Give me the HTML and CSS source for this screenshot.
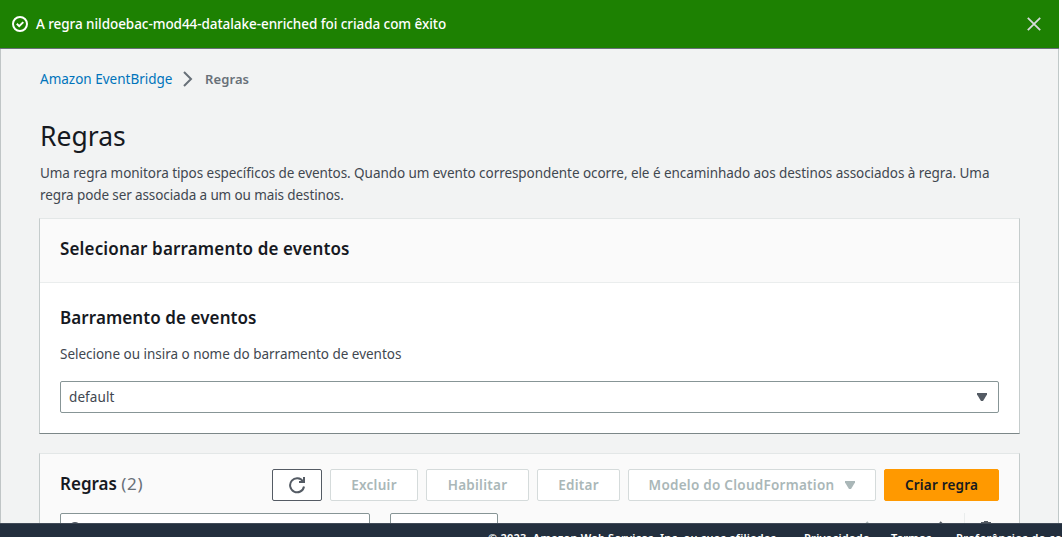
FILE: index.html
```html
<!DOCTYPE html>
<html lang="pt-BR">
<head>
<meta charset="utf-8">
<title>Regras - Amazon EventBridge</title>
<link rel="stylesheet" href="styles.css">
</head>
<body>
<div class="app">
  <div class="flash">
    <svg class="flash-icon" width="16" height="16" viewBox="0 0 16 16" fill="none" stroke="#fff" stroke-width="2"><circle cx="8" cy="8" r="7"/><path d="M4.8 7.8l2.4 2.4 4.1-4.1"/></svg>
    <span class="flash-text">A regra nildoebac-mod44-datalake-enriched foi criada com êxito</span>
    <svg class="flash-close" width="14" height="14" viewBox="0 0 14 14" fill="none" stroke="#d5dbdb" stroke-width="1.8"><path d="M.8.8l12.4 12.4M13.200.8L.8 13.200"/></svg>
  </div>
  <main class="page">
    <nav class="crumbs">
      <a class="crumb-link">Amazon EventBridge</a>
      <svg class="crumb-sep" width="10" height="16" viewBox="0 0 10 16" fill="none" stroke="#687078" stroke-width="2"><path d="M1 1l7 7-7 7"/></svg>
      <span class="crumb-here">Regras</span>
    </nav>
    <h1 class="title"><span>Regras</span></h1>
    <p class="intro"><span class="intro-a">Uma regra monitora tipos específicos de eventos. Quando um evento correspondente ocorre, ele é encaminhado aos destinos associados à regra. Uma</span><br><span class="intro-b">regra pode ser associada a um ou mais destinos.</span></p>
    <section class="card">
      <header class="card-head"><h2 class="h2-select">Selecionar barramento de eventos</h2></header>
      <div class="card-body">
        <h2 class="h2-bus">Barramento de eventos</h2>
        <p class="hint"><span>Selecione ou insira o nome do barramento de eventos</span></p>
        <div class="select"><span class="select-text">default</span><svg width="10" height="8" viewBox="0 0 10 8" fill="#545b64"><path d="M0 0h10v1.500L6 8H4L0 1.500z"/></svg></div>
      </div>
    </section>
    <section class="card rules">
      <div class="toolbar">
        <h2 class="rules-title"><span class="rules-name">Regras</span> <span class="count">(2)</span></h2>
        <button class="btn refresh"><svg width="18" height="18" viewBox="0 0 18 18" fill="none" stroke="#545b64" stroke-width="2"><path d="M16 10.500A7 7 0 1 1 15 5.500"/><path d="M11 6h5V1"/></svg></button>
        <button class="btn off excluir"><span>Excluir</span></button>
        <button class="btn off habilitar"><span>Habilitar</span></button>
        <button class="btn off editar"><span>Editar</span></button>
        <button class="btn off modelo"><span>Modelo do CloudFormation</span><svg width="10" height="8" viewBox="0 0 10 8" fill="#aab7b8"><path d="M0 0h10v1.500L6 8H4L0 1.500z"/></svg></button>
        <button class="btn primary"><span>Criar regra</span></button>
      </div>
      <div class="filters">
        <div class="search"><svg width="14" height="14" viewBox="0 0 14 14" fill="none" stroke="#545b64" stroke-width="2"><circle cx="6" cy="6" r="5"/><path d="M10 10l3 3"/></svg></div>
        <div class="status"></div>
        <div class="pager">
          <svg width="10" height="14" viewBox="0 0 10 14" fill="none" stroke="#aab7b8" stroke-width="2"><path d="M8 1L2 7l6 6"/></svg>
          <svg width="10" height="14" viewBox="0 0 10 14" fill="none" stroke="#545b64" stroke-width="2"><path d="M2 1l6 6-6 6"/></svg>
        </div>
        <div class="prefs"><svg width="16" height="16" viewBox="0 0 16 16" fill="#545b64" fill-rule="evenodd"><path d="M6 0h4v1h3v2l2 1v3l-1 1 1 1v3l-2 1v2h-3v1H6v-1H3v-2l-2-1V9l1-1-1-1V4l2-1V1h3zM8 4a4 4 0 1 0 0 8 4 4 0 0 0 0-8z"/></svg></div>
      </div>
    </section>
  </main>
</div>
<footer class="footer">
  <span class="copy">© 2023, Amazon Web Services, Inc. ou suas afiliadas.</span>
  <span class="priv">Privacidade</span>
  <span class="terms">Termos</span>
  <span class="cookies">Preferências de cookies</span>
</footer>
</body>
</html>
```
FILE: styles.css
```css
* { box-sizing: border-box; }
body {
  margin: 0;
  display: flex;
  flex-direction: column;
  height: 537px;
  overflow: hidden;
  background: #fff;
  color: #16191f;
  font-family: "Noto Sans", "Open Sans", sans-serif;
  font-size: 14px;
}
h1, h2, p { margin: 0; }
span, h2, a { white-space: nowrap; }
svg { display: block; flex: none; }
.app { width: 1059px; height: 523px; overflow: hidden; }
.flash {
  display: flex;
  align-items: center;
  height: 49px;
  padding: 0 18px 1px 12px;
  background: #1d8102;
  border-bottom: 1px solid #687078;
  color: #fff;
}
.flash-text { margin-left: 8px; font-size: 13.500px; font-weight: 500; letter-spacing: -0.060px; }
.flash-close { margin-left: auto; }
.page {
  height: 474px;
  padding: 19px 38px 0 39px;
  background: #f2f3f3;
  border-left: 1px solid #c0c5c6;
  border-right: 1px solid #c0c8c8;
  overflow: hidden;
}
.crumbs { display: flex; align-items: center; height: 22px; }
.crumb-link { width: 143px; color: #0073bb; font-size: 13.500px; }
.crumb-sep { margin-right: 12px; }
.crumb-here { color: #687078; font-size: 13px; font-weight: 600; letter-spacing: 0.100px; }
.title { margin-top: 28px; height: 36px; line-height: 36px; font-size: 26.500px; font-weight: 400; }
.intro { margin-top: 8px; line-height: 22px; font-size: 13.500px; color: #414750; }
.intro-a { letter-spacing: -0.058px; }
.intro-b { letter-spacing: -0.110px; }
.card {
  margin-top: 12px;
  width: 981px;
  margin-left: -1px;
  height: 216px;
  background: #fff;
  border: 1px solid #c5cccc;
  border-top-color: #e3e7e7;
  border-bottom-color: #7c8788;
}
.card-head { height: 64px; padding: 18px 20px; background: #fafafa; border-bottom: 1px solid #eaeded; }
h2 { height: 24px; line-height: 24px; font-size: 17px; font-weight: 600; }
.h2-select { letter-spacing: 0.150px; }
.h2-bus { letter-spacing: 0.080px; }
.card-body { padding: 23px 20px 0; }
.hint { margin-top: 13px; line-height: 22px; font-size: 13.500px; letter-spacing: -0.020px; color: #414750; }
.select {
  display: flex;
  align-items: center;
  justify-content: space-between;
  margin-top: 16px;
  width: 939px;
  height: 32px;
  padding: 0 11px 0 8px;
  border: 1px solid #879596;
  border-radius: 2px;
  color: #414750;
  font-size: 13.500px;
  letter-spacing: 0.100px;
}
.rules { margin-top: 19px; background: #fafafa; }
.toolbar { display: flex; gap: 8px; padding: 15px 20px 0; height: 47px; }
.rules-title { margin-top: 3px; width: 204px; }
.count { color: #687078; font-weight: 400; letter-spacing: 0.700px; }
.btn {
  display: flex;
  align-items: center;
  justify-content: center;
  flex: none;
  height: 32px;
  padding: 0;
  border: 1px solid #545b64;
  border-radius: 2px;
  background: #fff;
  font: 600 13.500px "Noto Sans", sans-serif;
  letter-spacing: 0.260px;
}
.off { border-color: #d5dbdb; color: #aab7b8; }
.refresh { width: 50px; }
.excluir { width: 88px; }
.habilitar { width: 103px; }
.editar { width: 83px; }
.modelo { width: 248px; gap: 11px; }
.primary { width: 115px; background: #f90; border-color: #f90; color: #16191f; letter-spacing: 0.180px; }
.filters { display: flex; padding: 12px 20px 0; }
.search, .status { height: 32px; background: #fff; border: 1px solid #879596; border-radius: 2px; }
.search { width: 310px; padding: 8px 0 0 8px; }
.status { width: 108px; margin-left: 20px; }
.pager { display: flex; justify-content: space-between; width: 88px; margin: 8px 16px 0 362px; }
.prefs { padding: 8px 0 0 13px; border-left: 1px solid #eaeded; height: 32px; }
.footer {
  display: flex;
  height: 14px;
  padding: 6px 0 0 488px;
  background: #232f3e;
  border-top: 1px solid #414b58;
  color: #fff;
  overflow: hidden;
  line-height: 15px;
  font-size: 11px;
  font-weight: 600;
}
.footer span { flex: none; }
.copy { width: 316px; letter-spacing: 0.220px; }
.priv { width: 87px; letter-spacing: 0.300px; }
.terms { width: 65px; letter-spacing: 0.200px; }
.cookies { letter-spacing: 0.450px; }
```
